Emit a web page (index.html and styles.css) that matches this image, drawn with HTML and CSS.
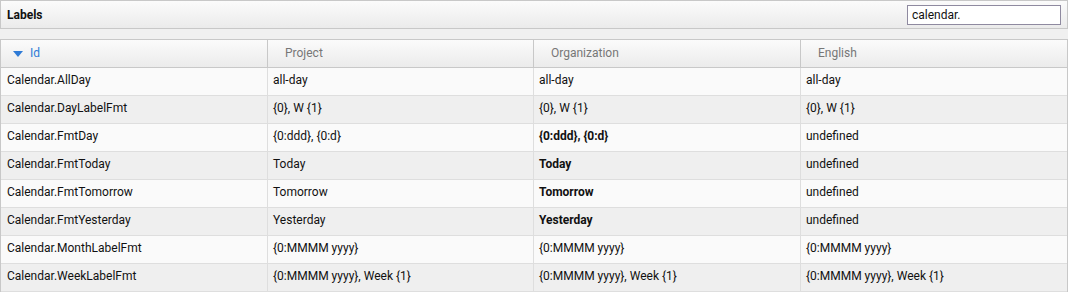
FILE: index.html
```html
<!DOCTYPE html>
<html>
<head>
<meta charset="utf-8">
<link rel="stylesheet" href="styles.css">
</head>
<body>
<div class="panel">
  <span class="title">Labels</span>
  <input class="search" type="text" value="calendar.">
</div>
<div class="grid">
  <div class="row head">
    <div class="hcell sorted"><svg class="arrow" width="10" height="6" viewBox="0 0 10 6"><path d="M0 0H10L5 6Z" fill="#2f7bd6"/></svg>Id</div>
    <div class="hcell">Project</div>
    <div class="hcell">Organization</div>
    <div class="hcell">English</div>
  </div>
  <div class="row"><div class="cell">Calendar.AllDay</div><div class="cell">all-day</div><div class="cell">all-day</div><div class="cell">all-day</div></div>
  <div class="row"><div class="cell">Calendar.DayLabelFmt</div><div class="cell">{0}, W {1}</div><div class="cell">{0}, W {1}</div><div class="cell">{0}, W {1}</div></div>
  <div class="row"><div class="cell">Calendar.FmtDay</div><div class="cell">{0:ddd}, {0:d}</div><div class="cell b">{0:ddd}, {0:d}</div><div class="cell">undefined</div></div>
  <div class="row"><div class="cell">Calendar.FmtToday</div><div class="cell">Today</div><div class="cell b">Today</div><div class="cell">undefined</div></div>
  <div class="row"><div class="cell">Calendar.FmtTomorrow</div><div class="cell">Tomorrow</div><div class="cell b">Tomorrow</div><div class="cell">undefined</div></div>
  <div class="row"><div class="cell">Calendar.FmtYesterday</div><div class="cell">Yesterday</div><div class="cell b">Yesterday</div><div class="cell">undefined</div></div>
  <div class="row"><div class="cell">Calendar.MonthLabelFmt</div><div class="cell">{0:MMMM yyyy}</div><div class="cell">{0:MMMM yyyy}</div><div class="cell">{0:MMMM yyyy}</div></div>
  <div class="row"><div class="cell">Calendar.WeekLabelFmt</div><div class="cell">{0:MMMM yyyy}, Week {1}</div><div class="cell">{0:MMMM yyyy}, Week {1}</div><div class="cell">{0:MMMM yyyy}, Week {1}</div></div>
</div>
</body>
</html>
```
FILE: styles.css
```css
html, body {
  margin: 0;
  padding: 0;
  background: #f0f0f0;
  font-family: Roboto, "Liberation Sans", Arial, sans-serif;
  font-size: 12px;
  color: #111;
}
.panel {
  box-sizing: border-box;
  height: 29px;
  border: 1px solid #c8c8c8;
  background: linear-gradient(#fbfbfb, #ebebeb);
  display: flex;
  align-items: center;
  justify-content: space-between;
  padding: 0 6px 0 6px;
}
.title {
  font-weight: bold;
  font-size: 12px;
  color: #111;
}
.search {
  box-sizing: border-box;
  width: 154px;
  height: 20px;
  margin-top: 1px;
  border: 1px solid #8f8aa0;
  background: #fff;
  font-family: Roboto, "Liberation Sans", Arial, sans-serif;
  font-size: 12px;
  color: #111;
  padding: 0 4px;
  outline: none;
}
.grid {
  margin-top: 10px;
  box-sizing: border-box;
  border-left: 1px solid #c8c8c8;
  border-right: 1px solid #c8c8c8;
  border-top: 1px solid #c8c8c8;
}
.row {
  display: grid;
  grid-template-columns: 266px 266px 267px 1fr;
  height: 28px;
  box-sizing: border-box;
  border-bottom: 1px solid #dedede;
  background: #fafafa;
}
.row:nth-child(odd) {
  background: #efefef;
}
.row.head {
  background: linear-gradient(#fbfbfb, #ebebeb);
  border-bottom: 1px solid #c8c8c8;
}
.hcell {
  display: flex;
  align-items: center;
  padding-left: 17px;
  padding-bottom: 1px;
  color: #777;
  border-left: 1px solid #c8c8c8;
}
.hcell:first-child {
  border-left: none;
  padding-left: 12px;
}
.hcell.sorted {
  color: #2f7bd6;
}
.arrow {
  margin-right: 7px;
  margin-top: 1px;
}
.cell {
  display: flex;
  align-items: center;
  padding-left: 5px;
  padding-bottom: 3px;
  border-left: 1px solid #dedede;
  white-space: nowrap;
}
.cell:first-child {
  border-left: none;
  padding-left: 6px;
}
.cell.b {
  font-weight: bold;
}
```
